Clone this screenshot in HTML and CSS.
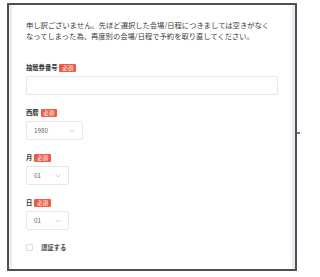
FILE: index.html
```html
<!DOCTYPE html>
<html lang="ja">
<head>
<meta charset="utf-8">
<link rel="stylesheet" href="styles.css">
</head>
<body>
<div class="frame">
  <p class="notice">申し訳ございません。先ほど選択した会場/日程につきましては空きがなく<br>なってしまった為、再度別の会場/日程で予約を取り直してください。</p>

  <div class="field first">
    <div class="label">抽籤券番号<span class="badge">必須</span></div>
    <div class="input"></div>
  </div>

  <div class="field">
    <div class="label">西暦<span class="badge">必須</span></div>
    <div class="select wide"><span>1980</span><svg class="chev" width="6" height="4" viewBox="0 0 6 4"><polyline points="0.5,0.5 3,3 5.5,0.5" fill="none" stroke="#c4c4c4" stroke-width="0.8"/></svg></div>
  </div>

  <div class="field">
    <div class="label">月<span class="badge">必須</span></div>
    <div class="select"><span>01</span><svg class="chev" width="6" height="4" viewBox="0 0 6 4"><polyline points="0.5,0.5 3,3 5.5,0.5" fill="none" stroke="#c4c4c4" stroke-width="0.8"/></svg></div>
  </div>

  <div class="field">
    <div class="label">日<span class="badge">必須</span></div>
    <div class="select"><span>01</span><svg class="chev" width="6" height="4" viewBox="0 0 6 4"><polyline points="0.5,0.5 3,3 5.5,0.5" fill="none" stroke="#c4c4c4" stroke-width="0.8"/></svg></div>
  </div>

  <label class="check"><span class="box"></span><span class="check-text">認証する</span></label>
</div>
<div class="tick"></div>
</body>
</html>
```

FILE: styles.css
```css
html, body {
  margin: 0;
  padding: 0;
  background: #ffffff;
}
body {
  width: 300px;
  height: 277px;
  position: relative;
  overflow: hidden;
  font-family: "Noto Sans CJK JP", "Noto Sans", sans-serif;
  color: #333333;
}
.frame {
  box-sizing: border-box;
  margin: 3px 0 0 7px;
  width: 290px;
  height: 268px;
  border: 2px solid #505050;
  background: #ffffff;
  box-shadow: inset 3px 0 0 #eceef7, inset -3px 0 0 #e8ebf6;
  padding: 15px 17px 0 17px;
  display: flex;
  flex-direction: column;
}
.notice {
  margin: 0;
  font-size: 7.3px;
  line-height: 11px;
  color: #3a3a3a;
  white-space: nowrap;
}
.field {
  display: flex;
  flex-direction: column;
  margin-top: 14px;
}
.field.first {
  margin-top: 22px;
}
.label {
  display: flex;
  align-items: center;
  height: 8px;
  font-size: 6.3px;
  font-weight: 700;
  color: #333333;
  line-height: 8px;
}
.badge {
  display: inline-block;
  margin-left: 2px;
  padding: 0 3px;
  height: 8px;
  line-height: 8px;
  font-size: 5.4px;
  font-weight: 400;
  color: #ffffff;
  background: #ef5a45;
  border-radius: 1px;
}
.input {
  box-sizing: border-box;
  margin-top: 4px;
  width: 252px;
  height: 19px;
  border: 1px solid #e6e6e6;
  border-radius: 2px;
}
.select {
  box-sizing: border-box;
  margin-top: 4px;
  width: 43px;
  height: 19px;
  border: 1px solid #e6e6e6;
  border-radius: 2px;
  display: flex;
  align-items: center;
  justify-content: space-between;
  padding: 0 7px 0 7px;
  font-size: 6.3px;
  color: #666666;
}
.select.wide {
  width: 57px;
}
.chev {
  display: block;
}
.check {
  display: flex;
  align-items: center;
  margin-top: 13px;
  height: 8px;
}
.box {
  box-sizing: border-box;
  width: 7px;
  height: 7px;
  border: 1px solid #dcdcdc;
  border-radius: 1px;
}
.check-text {
  margin-left: 8px;
  font-size: 6.3px;
  font-weight: 700;
  color: #444444;
}
.tick {
  position: absolute;
  left: 297px;
  top: 132px;
  width: 3px;
  height: 2px;
  background: #777777;
}
```
